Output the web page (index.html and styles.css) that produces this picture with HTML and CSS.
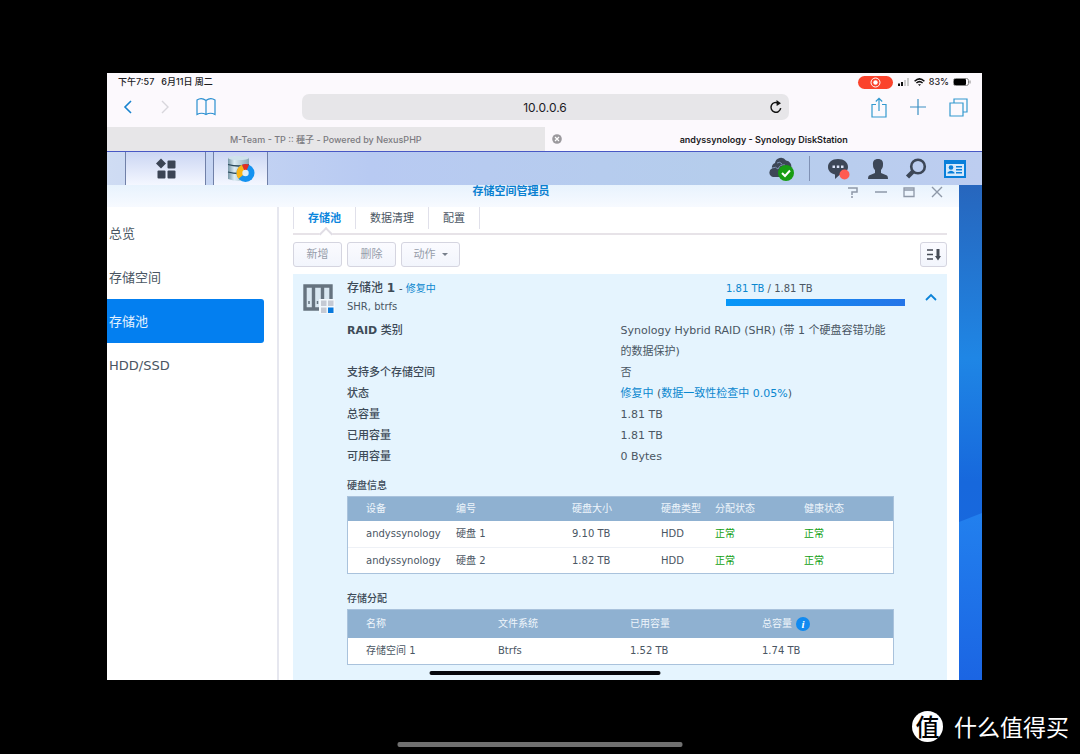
FILE: index.html
```html
<!DOCTYPE html>
<html lang="zh-CN">
<head>
<meta charset="utf-8">
<meta name="viewport" content="width=device-width, initial-scale=1">
<title>存储空间管理员</title>
<link rel="stylesheet" href="styles.css">
</head>
<body>
<div class="tablet">
  <header class="browser">
    <div class="status">
      <span>下午7:57</span><span class="status-date">6月11日 周二</span>
      <span class="record"><svg width="11" height="11" viewBox="0 0 11 11"><circle cx="5.5" cy="5.5" r="4.5" fill="none" stroke="#fff"/><circle cx="5.5" cy="5.5" r="2.2" fill="#fff"/></svg></span>
      <svg width="12" height="8" viewBox="0 0 12 8"><path fill="#111" d="M0 5.5h2V8H0zM3 4h2v4H3z"/><path fill="#ccc" d="M6 2h2v6H6zM9 0h2v8H9z"/></svg>
      <svg width="11" height="8" viewBox="0 0 11 8" fill="none" stroke="#111" stroke-width="1.5"><path d="M.6 3.2Q5.5-1.4 10.4 3.2M2.4 5Q5.5 2.2 8.6 5"/><path d="M4 6.2h3L5.500 8z" fill="#111" stroke="none"/></svg>
      <span>83%</span>
      <svg width="18" height="8" viewBox="0 0 18 8"><rect x=".5" y=".5" width="15" height="7" rx="2" fill="none" stroke="#888"/><rect x="1" y="1" width="12" height="6" rx="1" fill="#000"/><path d="M17 2.500v3" stroke="#888"/></svg>
    </div>
    <div class="toolbar">
      <nav class="tools" aria-label="浏览">
        <button class="icon-btn" aria-label="后退"><svg width="12" height="16" viewBox="0 0 12 16"><path d="M9 2 3 8l6 6" fill="none" stroke="#1783cf" stroke-width="1.600"/></svg></button>
        <button class="icon-btn" aria-label="前进"><svg width="12" height="16" viewBox="0 0 12 16"><path d="m3 2 6 6-6 6" fill="none" stroke="#d8d6dc" stroke-width="1.400"/></svg></button>
        <button class="icon-btn" aria-label="书签"><svg width="20" height="20" viewBox="0 0 20 20"><path d="M10 3.500Q5.500 0 1 3v14.500q4.500-2.500 9 0 4.500-2.500 9 0V3q-4.500-3-9 .5v14" fill="none" stroke="#2a8fd0" stroke-width="1.200"/></svg></button>
      </nav>
      <div class="address">
        <input class="address-input" type="text" value="10.0.0.6" aria-label="地址">
        <button class="icon-btn" aria-label="重新载入"><svg width="14" height="14" viewBox="0 0 14 14"><path d="M11.700 8.200A4.900 4.900 0 1 1 9.500 3.200" fill="none" stroke="#111" stroke-width="1.500"/><path d="M7.500 0 12 3.300 7.700 6z" fill="#111"/></svg></button>
      </div>
      <nav class="tools tools-end" aria-label="操作">
        <button class="icon-btn" aria-label="共享"><svg width="16" height="21" viewBox="0 0 16 21" fill="none" stroke="#3399cf" stroke-width="1.200"><path d="M5 7.500H1V20h14V7.500h-4M8 14V1.500M4.800 4.500 8 1.300l3.200 3.200"/></svg></button>
        <button class="icon-btn" aria-label="新标签页"><svg width="16" height="16" viewBox="0 0 16 16"><path d="M8 0v16M0 8h16" stroke="#3a8fc4" stroke-width="1.200"/></svg></button>
        <button class="icon-btn" aria-label="标签页"><svg width="19" height="19" viewBox="0 0 19 19" fill="none" stroke="#3399cf" stroke-width="1.200"><path d="M1 5h13v13H1zM5 5V1h13v13h-4"/></svg></button>
      </nav>
    </div>
    <div class="pages">
      <button class="page">M-Team - TP :: 種子 - Powered by NexusPHP</button>
      <div class="page-current">
        <button class="icon-btn page-close" aria-label="关闭标签页"><svg width="10" height="10" viewBox="0 0 10 10"><circle cx="5" cy="5" r="4.800" fill="#9b999d"/><path d="m3 3 4 4M7 3 3 7" stroke="#fff" stroke-width="1.200"/></svg></button>
        <button class="page-name">andyssynology - Synology DiskStation</button>
      </div>
    </div>
  </header>

  <div class="desktop">
    <div class="taskbar">
      <button class="task task-menu" aria-label="主菜单"><svg width="22" height="22" viewBox="0 0 22 22" fill="#3b4454"><path d="M6 .500 11 5.500 6 10.500 1 5.500z"/><rect x="12.500" y="2.500" width="8" height="8" rx="1"/><rect x="2.500" y="12.500" width="8" height="8" rx="1"/><rect x="12.500" y="12.500" width="8" height="8" rx="1"/></svg></button>
      <button class="task task-app" aria-label="存储空间管理员"><svg width="28" height="28" viewBox="0 0 28 28"><defs><linearGradient id="cyl"><stop stop-color="#7998a8"/><stop offset=".3" stop-color="#dcecf3"/><stop offset="1" stop-color="#8ba9b8"/></linearGradient></defs><path d="M1 3Q12-.500 22 3v21q-10 4-21 0z" fill="url(#cyl)"/><ellipse cx="11.500" cy="3" rx="10.500" ry="2" fill="#cfe2ec"/><path d="M1 9.500q10.500 3 21 0M1 17q10.500 3 21 0" fill="none" stroke="#29485a" stroke-width="1.300"/><circle cx="18.500" cy="18" r="9" fill="#1492f0"/><path d="M18.500 18 11.500 23.700A9 9 0 0 1 15 9.700z" fill="#fbb514"/><path d="M18.500 18 15 9.700a9 9 0 0 1 7 0z" fill="#e62d20"/><circle cx="18.500" cy="18" r="3.200" fill="#dceefa"/></svg></button>
      <div class="tray">
        <button class="icon-btn" aria-label="同步状态"><svg width="26" height="24" viewBox="0 0 26 24"><path d="M4 20a4.500 4.500 0 0 1-1-8.500A5 5 0 0 1 6 6 6 6 0 0 1 17 3.500a6 6 0 0 1 5 8V20z" fill="#3d4757"/><path d="M3 11q4-2 6 1 2-5 7-4M8 6q3-2 5 1" fill="none" stroke="#8195b5" stroke-width="1"/><circle cx="17" cy="16" r="8" fill="#179c13"/><path d="m13 16 3 3 5-5.500" fill="none" stroke="#fff" stroke-width="2"/></svg></button>
        <span class="tray-line"></span>
        <button class="icon-btn" aria-label="通知"><svg width="24" height="24" viewBox="0 0 24 24"><path d="M11 2c6 0 10 3.500 10 8 0 4-3.500 7.500-8.500 8L8 22v-4.500C4 16.500 1 14 1 10c0-4.500 4-8 10-8z" fill="#3d4757"/><path d="M5.500 8.500h2.500v2.500H5.500zm4.300 0h2.500v2.500H9.800zm4.200 0h2.500v2.500H14z" fill="#dbe4f8"/><circle cx="17.500" cy="17.500" r="5" fill="#ff5b51"/></svg></button>
        <button class="icon-btn" aria-label="选项"><svg width="20" height="22" viewBox="0 0 20 22"><path d="M10 1c3.500 0 5.500 2 5 6 0 3-1.500 4-2 5v3l6 2.500q1 .500 1 3.500H0q0-3 1-3.500L7 15v-3C6 11 5 10 5 7c-.500-4 1.500-6 5-6z" fill="#3d4757"/></svg></button>
        <button class="icon-btn" aria-label="搜索"><svg width="22" height="22" viewBox="0 0 22 22"><circle cx="13" cy="8.500" r="6.800" fill="none" stroke="#3d4757" stroke-width="2.600"/><path d="m8 13.500-5.500 5.500" stroke="#3d4757" stroke-width="4.500"/></svg></button>
        <button class="icon-btn" aria-label="小组件"><svg width="22" height="18" viewBox="0 0 22 18"><path d="M0 0h22v18H0z" fill="#087fda"/><path d="M2 4h18v12H2z" fill="#d5e9fb"/><circle cx="7" cy="7.500" r="2.300" fill="#087fda"/><path d="M3.500 13.500v-1q3.500-3.500 7 0v1zM12 6h6v1.500h-6zM12 9h6v1.500h-6zM12 12h6v1.500h-6z" fill="#087fda"/></svg></button>
      </div>
    </div>

    <div class="wallpaper">
      <main class="window">
        <div class="titlebar">
          <h1 class="window-title">存储空间管理员</h1>
          <div class="window-buttons">
            <button class="icon-btn" aria-label="帮助"><svg width="12" height="12" viewBox="0 0 12 12"><path d="M1 2h9v4H5v3M5 10v2" fill="none" stroke="#8e98a8" stroke-width="1.500"/></svg></button>
            <button class="icon-btn" aria-label="最小化"><svg width="12" height="12" viewBox="0 0 12 12"><path d="M0 6h12" stroke="#8e98a8" stroke-width="1.500"/></svg></button>
            <button class="icon-btn" aria-label="最大化"><svg width="12" height="12" viewBox="0 0 12 12"><path d="M1 2h10v8.500H1zM1 4h10" fill="none" stroke="#8e98a8" stroke-width="1.300"/></svg></button>
            <button class="icon-btn" aria-label="关闭"><svg width="12" height="12" viewBox="0 0 12 12"><path d="m1 1 10 10M11 1 1 11" stroke="#8e98a8" stroke-width="1.400"/></svg></button>
          </div>
        </div>
        <div class="panes">
          <nav class="sidebar">
            <a class="side-link" href="#overview">总览</a>
            <a class="side-link" href="#volume">存储空间</a>
            <a class="side-link side-link-active" href="#pool">存储池</a>
            <a class="side-link" href="#hdd">HDD/SSD</a>
          </nav>
          <section class="content">
            <div class="tabs">
              <button class="tab tab-active">存储池</button>
              <button class="tab">数据清理</button>
              <button class="tab">配置</button>
            </div>
            <div class="actions">
              <button class="action">新增</button>
              <button class="action">删除</button>
              <button class="action action-menu">动作<svg width="6" height="3" viewBox="0 0 6 3"><path d="M0 0h6L3 3z" fill="#777f8b"/></svg></button>
              <button class="action sort" aria-label="排序"><svg width="14" height="12" viewBox="0 0 14 12"><path d="M0 1h6M0 5.500h6M0 10h6" stroke="#454b55" stroke-width="1.700"/><path d="M9.500 0h3v7H14l-3 4.500L8 7h1.500z" fill="#454b55"/></svg></button>
            </div>
            <article class="pool">
              <svg class="pool-icon" width="32" height="30" viewBox="0 0 32 30"><path d="M2 2h26v23H2z" fill="#d9e7f1"/><path d="M2 2h26v23H2zM10.500 2v23M19.500 2v23" fill="none" stroke="#66737f" stroke-width="3.400"/><path d="M6 17v3M14.500 17v3" stroke="#66737f" stroke-width="1.500"/><path d="M16 15h16v15H16z" fill="#f2f8fd"/><path d="M18 16.500h5.500V22H18zM25 16.500h5.500V22H25zM18 23.500h5.500V29H18z" fill="#c5cad4"/><path d="M25 23.500h5.500V29H25z" fill="#0879dc"/></svg>
              <div class="pool-main">
                <div class="pool-head">
                  <div>
                    <h2 class="pool-name">存储池 <strong>1</strong> <span class="pool-state">- <span class="blue">修复中</span></span></h2>
                    <p class="pool-kind">SHR, btrfs</p>
                  </div>
                  <div class="usage">
                    <p class="usage-text"><span class="blue">1.81 TB</span> / 1.81 TB</p>
                    <div class="usage-bar"></div>
                  </div>
                </div>
                <dl class="facts">
                  <dt><strong>RAID</strong> 类别</dt><dd class="fact-wrap">Synology Hybrid RAID (SHR) (带 1 个硬盘容错功能的数据保护)</dd>
                  <dt>支持多个存储空间</dt><dd>否</dd>
                  <dt>状态</dt><dd><span class="blue">修复中</span> (<span class="blue">数据一致性检查中 0.05%</span>)</dd>
                  <dt>总容量</dt><dd>1.81 TB</dd>
                  <dt>已用容量</dt><dd>1.81 TB</dd>
                  <dt>可用容量</dt><dd>0 Bytes</dd>
                </dl>
                <h3 class="table-title" id="disks">硬盘信息</h3>
                <table class="table disks" aria-labelledby="disks">
                  <colgroup><col class="c-device"><col class="c-number"><col class="c-size"><col class="c-type"><col class="c-size"><col></colgroup>
                  <thead><tr><th>设备</th><th>编号</th><th>硬盘大小</th><th>硬盘类型</th><th>分配状态</th><th>健康状态</th></tr></thead>
                  <tbody>
                    <tr><td>andyssynology</td><td>硬盘 1</td><td>9.10 TB</td><td>HDD</td><td class="good">正常</td><td class="good">正常</td></tr>
                    <tr><td>andyssynology</td><td>硬盘 2</td><td>1.82 TB</td><td>HDD</td><td class="good">正常</td><td class="good">正常</td></tr>
                  </tbody>
                </table>
                <h3 class="table-title" id="volumes">存储分配</h3>
                <table class="table volumes" aria-labelledby="volumes">
                  <colgroup><col class="c-name"><col class="c-fs"><col class="c-fs"><col></colgroup>
                  <thead><tr><th>名称</th><th>文件系统</th><th>已用容量</th><th><span class="with-info">总容量 <span class="info">i</span></span></th></tr></thead>
                  <tbody><tr><td>存储空间 1</td><td>Btrfs</td><td>1.52 TB</td><td>1.74 TB</td></tr></tbody>
                </table>
              </div>
              <button class="icon-btn collapse" aria-label="收起"><svg width="12" height="8" viewBox="0 0 12 8"><path d="m1 7 5-5 5 5" fill="none" stroke="#0b83d8" stroke-width="1.800"/></svg></button>
            </article>
          </section>
        </div>
      </main>
      <svg class="beam" viewBox="0 0 23 495" preserveAspectRatio="none"><defs><linearGradient id="beam" x2="0" y2="1"><stop stop-color="#2280ee"/><stop offset="1" stop-color="#1b65e3"/></linearGradient></defs><path d="M0 337 23 328V495H0z" fill="url(#beam)"/></svg>
    </div>
  </div>
  <span class="home"></span>
</div>
<footer class="footer">
  <div class="brand"><span class="brand-mark">值</span><span>什么值得买</span></div>
  <span class="home home-outer"></span>
</footer>
</body>
</html>
```
FILE: styles.css
```css
* { box-sizing: border-box; }

body {
  margin: 0;
  background: #000;
  color: #4a5663;
  font: 11px/21px "DejaVu Sans", "Noto Sans CJK SC", sans-serif;
}

button, input { font: inherit; color: inherit; }
h1, h2, h3, p, dl, dd { margin: 0; }
h1, h2, h3 { font-size: 11px; font-weight: 500; }
a { text-decoration: none; color: inherit; }
svg { display: block; flex: none; }

.icon-btn { display: flex; padding: 0; border: 0; background: none; }
.blue { color: #0a87cf; }
.good { color: #12a012; }

.tablet {
  position: relative;
  margin: 73px 98px 0 107px;
  background: #fcf9fd;
  overflow: hidden;
}

/* Browser chrome */
.browser { font-family: Inter, "Noto Sans CJK SC", sans-serif; color: #1b1b1f; }

.status {
  display: flex;
  align-items: center;
  gap: 4px;
  height: 18px;
  padding: 0 11px;
  font-size: 9px;
  font-weight: 500;
  line-height: 18px;
}
.status-date { margin-right: auto; margin-left: 3px; }
.record {
  display: grid;
  place-items: center;
  width: 35px;
  height: 13px;
  margin-right: 1px;
  border-radius: 7px;
  background: #fb432c;
}

.toolbar {
  display: grid;
  grid-template-columns: 1fr 487px 1fr;
  align-items: center;
  height: 36px;
  padding: 0 14px 4px 15px;
}
.tools { display: flex; align-items: center; gap: 25px; }
.tools-end { justify-content: flex-end; gap: 23px; }
.address {
  display: flex;
  align-items: center;
  height: 26px;
  padding: 0 6px 0 20px;
  border-radius: 7px;
  background: #e7e6e9;
}
.address-input {
  flex: 1;
  min-width: 0;
  padding: 0;
  border: 0;
  background: none;
  font-size: 12px;
  text-align: center;
}

.pages {
  display: grid;
  grid-template-columns: 1fr 1fr;
  height: 24px;
  font-size: 9px;
}
.page { padding: 0; border: 0; background: #e7e6e8; color: #7b7a80; font-weight: 500; }
.page-current { display: flex; align-items: center; padding: 0 16px 0 7px; }
.page-name { flex: 1; padding: 0; border: 0; background: none; font-weight: 600; }

/* DSM desktop */
.taskbar {
  display: flex;
  height: 34px;
  padding-left: 18px;
  border-top: 1px solid #4858c4;
  background: linear-gradient(90deg, #cfdcf3, #b8caf2 30%, #b5cdec 70%, #bdcdf0);
}
.task {
  display: grid;
  place-items: center;
  padding: 0;
  border: solid #7080a8;
  border-width: 0 1px;
  background: linear-gradient(#cbd6f3, #f4f7ff);
}
.task-menu { width: 81px; margin-right: 7px; }
.task-app { width: 55px; }
.tray { display: flex; align-items: center; gap: 17px; margin-left: auto; padding-right: 16px; }
.tray-line { width: 1px; height: 25px; margin-left: -3px; background: #7f91b5; }

.wallpaper {
  position: relative;
  padding-right: 23px;
  background: linear-gradient(#2766bd, #1f86e5 35%, #1768dc 60%, #1a68e4);
}
.beam { position: absolute; top: 0; right: 0; width: 23px; height: 100%; }

.window { background: #fff; }
.titlebar {
  display: grid;
  grid-template-columns: 1fr auto 1fr;
  align-items: center;
  height: 22px;
  padding: 0 16px 8px 0;
  background: linear-gradient(#e8f3fd, #f7faff);
}
.window-title { grid-column: 2; margin-right: 28px; color: #0a80d0; font-weight: 700; line-height: 14px; }
.window-buttons { display: flex; justify-content: flex-end; gap: 16px; }

.panes { display: flex; }
.sidebar {
  flex: none;
  width: 172px;
  padding: 4px 13px 0 0;
  border-right: 2px solid #e6e7ef;
}
.side-link {
  display: block;
  padding: 12px 2px 11px;
  font-size: 13px;
}
.side-link-active { border-radius: 0 3px 3px 0; background: #037ff0; color: #e4f2ff; }

.content { flex: 1; min-width: 0; padding: 0 12px 0 14px; }

.tabs { display: flex; height: 28px; border-bottom: 2px solid #e7e3e8; }
.tab {
  position: relative;
  height: 22px;
  padding: 0 14px;
  border: 0;
  border-right: 1px solid #e0e0ea;
  background: none;
}
.tab:first-child { border-left: 1px solid #e0e0ea; }
.tab-active { color: #0a85dd; font-weight: 700; }
.tab-active::after {
  content: "";
  position: absolute;
  bottom: -10px;
  left: 50%;
  width: 8px;
  height: 8px;
  margin-left: -4px;
  border: solid #e0dde5;
  border-width: 2px 0 0 2px;
  background: #fff;
  transform: rotate(45deg);
}

.actions { display: flex; gap: 5px; padding: 7px 0; }
.action {
  display: flex;
  align-items: center;
  justify-content: center;
  gap: 6px;
  width: 49px;
  height: 25px;
  padding: 0;
  border: 1px solid #d5d5e0;
  border-radius: 3px;
  background: linear-gradient(#fbfbff, #f2f5fc);
  color: #969daa;
}
.action-menu { width: 59px; }
.sort { width: 27px; margin-left: auto; }

.pool {
  display: flex;
  gap: 12px;
  padding: 4px 10px 15px;
  background: #e5f4fe;
}
.pool-icon { margin-top: 6px; }
.pool-main { flex: 1; min-width: 0; }
.pool-head { display: flex; justify-content: space-between; }
.pool-name { font-size: 12px; line-height: 20px; color: #3e4b58; }
.pool-state { font-size: 10px; font-weight: 400; }
.pool-kind { font-size: 10px; line-height: 16px; }
.usage { width: 179px; margin-right: -11px; }
.usage-text { font-size: 10px; line-height: 21px; }
.usage-bar { height: 7px; background: linear-gradient(90deg, #0797f8, #2575e8); }
.collapse { align-self: flex-start; margin: 15px 0 0 19px; }

.facts { display: grid; grid-template-columns: 1fr 1fr; padding-top: 5px; }
.facts dt { color: #3e4b58; font-weight: 500; }
.fact-wrap { max-width: 270px; }

.table-title { padding-top: 8px; font-size: 10px; line-height: 21px; color: #3e4b58; }
.table {
  width: 100%;
  border: 1px solid #a9c2dc;
  border-collapse: separate;
  border-spacing: 0;
  table-layout: fixed;
  background: #fff;
  font-size: 10px;
}
.table th, .table td { height: 26px; padding: 0; line-height: 20px; text-align: left; }
.table th { background: #8fb1d1; color: #eef5fb; font-weight: 400; }
.table th:first-child, .table td:first-child { padding-left: 18px; }
.table tr + tr td { border-top: 1px solid #eef1f6; }
.disks { margin-bottom: 6px; }
.disks th { height: 24px; }
.volumes th { height: 28px; }
.c-device { width: 108px; }
.c-number { width: 116px; }
.c-size { width: 89px; }
.c-type { width: 54px; }
.c-name { width: 150px; }
.c-fs { width: 132px; }
.with-info { display: flex; align-items: center; gap: 4px; }
.info {
  width: 14px;
  height: 14px;
  border-radius: 50%;
  background: #118af0;
  color: #fff;
  font: italic bold 11px/14px "Liberation Serif", serif;
  text-align: center;
}

.home {
  position: absolute;
  bottom: 5px;
  left: 50%;
  width: 231px;
  height: 4px;
  border-radius: 2px;
  background: #05060c;
  transform: translateX(-50%);
}

.footer { position: relative; padding: 31px 11px 12px; }
.home-outer { bottom: 7px; width: 285px; height: 5px; background: #707070; }
.brand {
  display: flex;
  align-items: center;
  justify-content: flex-end;
  gap: 11px;
  color: #fff;
  font: 23px/31px "Noto Sans CJK SC", sans-serif;
}
.brand-mark {
  width: 31px;
  height: 31px;
  border-radius: 50%;
  background: #fff;
  color: #000;
  font-size: 24px;
  font-weight: 500;
  line-height: 29px;
  text-align: center;
}
```
